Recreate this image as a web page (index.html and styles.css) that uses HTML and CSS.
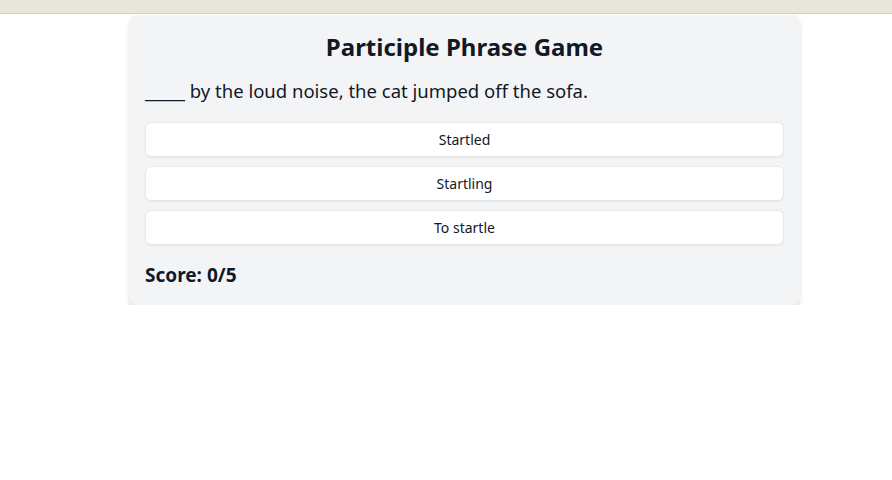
FILE: index.html
```html
<!DOCTYPE html>
<html>
<head>
<meta charset="utf-8">
<link rel="stylesheet" href="styles.css">
</head>
<body>
<div class="topbar"></div>
<main class="card">
  <h1 class="title">Participle Phrase Game</h1>
  <p class="sentence"><span class="blank">____</span> by the loud noise, the cat jumped off the sofa.</p>
  <div class="options">
    <button class="option">Startled</button>
    <button class="option">Startling</button>
    <button class="option">To startle</button>
  </div>
  <p class="score">Score: 0/5</p>
</main>
</body>
</html>
```
FILE: styles.css
```css
html, body {
  margin: 0;
  padding: 0;
  background: #ffffff;
  font-family: "Noto Sans", "Open Sans", sans-serif;
  color: #111827;
}
.topbar {
  height: 13px;
  background: #e8e5da;
  border-bottom: 1px solid #cfcdc4;
}
.card {
  width: 639px;
  margin: 1px 0 0 129px;
  padding: 16px;
  background: #f3f4f6;
  border-radius: 8px;
  box-shadow: 0 4px 6px -1px rgba(0,0,0,0.12), 0 2px 4px -1px rgba(0,0,0,0.07);
}
.title {
  margin: 0 0 14px;
  font-size: 24px;
  line-height: 32px;
  font-weight: 700;
  text-align: center;
}
.sentence {
  margin: 0 0 17px;
  font-size: 18.5px;
  line-height: 28px;
}
.blank {
  font-size: 22.5px;
  line-height: 0;
}
.options {
  display: flex;
  flex-direction: column;
  gap: 9px;
}
.option {
  height: 35px;
  background: #ffffff;
  border: 1px solid #e5e7eb;
  border-radius: 6px;
  box-shadow: 0 1px 2px rgba(0,0,0,0.05);
  font-family: inherit;
  font-size: 14px;
  color: #111827;
  padding: 0;
}
.score {
  margin: 16px 0 0;
  font-size: 19px;
  line-height: 28px;
  font-weight: 700;
}
```
